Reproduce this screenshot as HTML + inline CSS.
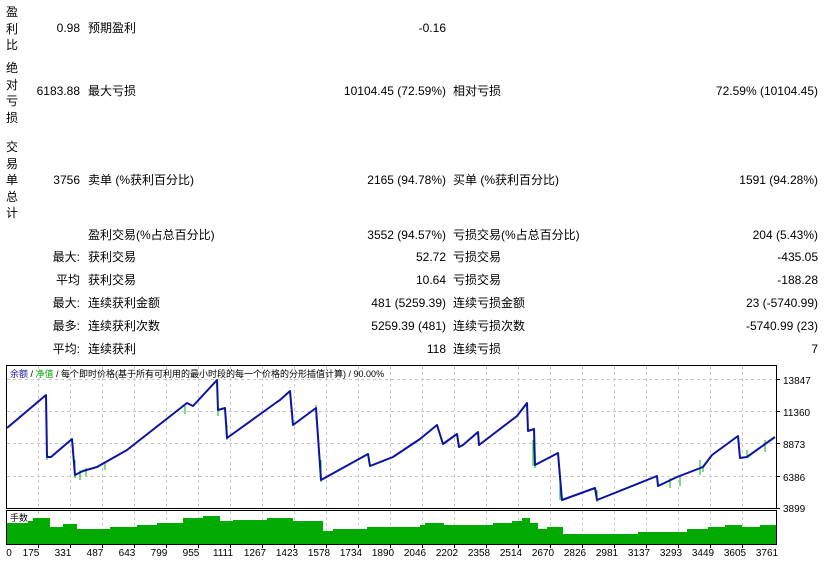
<!DOCTYPE html>
<html><head><meta charset="utf-8"><style>
body{margin:0;width:827px;height:564px;background:#fff;position:relative;overflow:hidden;font-family:"Liberation Sans","Noto Sans CJK SC",sans-serif;font-size:12px;color:#000}
.t{position:absolute;line-height:14px;white-space:nowrap}
.r{text-align:right}
.v{position:absolute;left:6px;width:12px;font-size:12px;line-height:16.5px}
</style></head><body>
<div class="v" style="top:4px">盈<br>利<br>比</div>
<div class="v" style="top:60px">绝<br>对<br>亏<br>损</div>
<div class="v" style="top:139px">交<br>易<br>单<br>总<br>计</div>

<div class="t r" style="right:747px;top:21px">0.98</div><div class="t" style="left:88px;top:21px">预期盈利</div><div class="t r" style="right:381px;top:21px">-0.16</div>
<div class="t r" style="right:747px;top:84px">6183.88</div><div class="t" style="left:88px;top:84px">最大亏损</div><div class="t r" style="right:381px;top:84px">10104.45 (72.59%)</div><div class="t" style="left:453px;top:84px">相对亏损</div><div class="t r" style="right:9px;top:84px">72.59% (10104.45)</div>
<div class="t r" style="right:747px;top:173px">3756</div><div class="t" style="left:88px;top:173px">卖单 (%获利百分比)</div><div class="t r" style="right:381px;top:173px">2165 (94.78%)</div><div class="t" style="left:453px;top:173px">买单 (%获利百分比)</div><div class="t r" style="right:9px;top:173px">1591 (94.28%)</div>
<div class="t" style="left:88px;top:228px">盈利交易(%占总百分比)</div><div class="t r" style="right:381px;top:228px">3552 (94.57%)</div><div class="t" style="left:453px;top:228px">亏损交易(%占总百分比)</div><div class="t r" style="right:9px;top:228px">204 (5.43%)</div>
<div class="t r" style="right:747px;top:250px">最大:</div><div class="t" style="left:88px;top:250px">获利交易</div><div class="t r" style="right:381px;top:250px">52.72</div><div class="t" style="left:453px;top:250px">亏损交易</div><div class="t r" style="right:9px;top:250px">-435.05</div>
<div class="t r" style="right:747px;top:273px">平均</div><div class="t" style="left:88px;top:273px">获利交易</div><div class="t r" style="right:381px;top:273px">10.64</div><div class="t" style="left:453px;top:273px">亏损交易</div><div class="t r" style="right:9px;top:273px">-188.28</div>
<div class="t r" style="right:747px;top:296px">最大:</div><div class="t" style="left:88px;top:296px">连续获利金额</div><div class="t r" style="right:381px;top:296px">481 (5259.39)</div><div class="t" style="left:453px;top:296px">连续亏损金额</div><div class="t r" style="right:9px;top:296px">23 (-5740.99)</div>
<div class="t r" style="right:747px;top:319px">最多:</div><div class="t" style="left:88px;top:319px">连续获利次数</div><div class="t r" style="right:381px;top:319px">5259.39 (481)</div><div class="t" style="left:453px;top:319px">连续亏损次数</div><div class="t r" style="right:9px;top:319px">-5740.99 (23)</div>
<div class="t r" style="right:747px;top:342px">平均:</div><div class="t" style="left:88px;top:342px">连续获利</div><div class="t r" style="right:381px;top:342px">118</div><div class="t" style="left:453px;top:342px">连续亏损</div><div class="t r" style="right:9px;top:342px">7</div>

<svg style="position:absolute;left:0;top:0" width="827" height="564" font-family="Liberation Sans, Noto Sans CJK SC, sans-serif" font-size="10">
<g stroke="#c8c8c8" stroke-dasharray="3,3" stroke-width="1">
<path d="M7 379.5H776M7 411.5H776M7 443.5H776M7 476.5H776"/>
<path d="M38.5 366V508M70.5 366V508M102.5 366V508M134.5 366V508M166.5 366V508M198.5 366V508M230.5 366V508M262.5 366V508M294.5 366V508M326.5 366V508M358.5 366V508M390.5 366V508M422.5 366V508M454.5 366V508M486.5 366V508M518.5 366V508M550.5 366V508M582.5 366V508M614.5 366V508M646.5 366V508M678.5 366V508M710.5 366V508M742.5 366V508"/>
<path d="M38.5 511V543M70.5 511V543M102.5 511V543M134.5 511V543M166.5 511V543M198.5 511V543M230.5 511V543M262.5 511V543M294.5 511V543M326.5 511V543M358.5 511V543M390.5 511V543M422.5 511V543M454.5 511V543M486.5 511V543M518.5 511V543M550.5 511V543M582.5 511V543M614.5 511V543M646.5 511V543M678.5 511V543M710.5 511V543M742.5 511V543"/>
</g>
<path fill="#00aa00" d="M7 544V523H28V521H33V518H50V527H63V524H77V529H110V527H137V525H157V523H183V518H203V516H220V521H233V520H267V518H293V521H323V531H333V529H367V527H383V527H420V525H425V523H444V525H493V523H512V521H522V518H530V523H538V529H547V527H563V534H598V534H638V532H687V529H708V527H725V525H742V527H760V525H776V544Z"/>
<path fill="none" stroke="#00bb00" stroke-width="1" d="M47 440V460M75 460V478M80 470V480M86 468V476M105 462V470M185 406V414M218 400V416M227 425V440M316 405V420M321 460V482M533 440V466M535 450V468M560 470V500M597 490V502M670 478V488M680 476V486M700 460V475M703 465V472M747 450V458M765 440V452"/>
<polyline fill="none" stroke="#0a14a0" stroke-width="2" stroke-linejoin="round" points="7,428 46,395 47,457 51,457 72,439 75,475 83,471 97,467 127,450 187,403 193,406 217,380 218,410 225,408 227,438 277,402 280,400 290,391 293,425 316,408 321,480 368,454 370,466 393,457 420,439 437,425 443,444 457,434 459,447 463,445 478,432 479,445 517,416 527,403 528,431 534,429 535,465 558,453 560,477 562,500 595,488 597,500 657,476 658,486 677,477 703,467 712,455 738,436 740,458 747,457 775,437"/>
<g fill="none" stroke="#000" stroke-width="1">
<rect x="6.5" y="365.5" width="770" height="143"/>
<rect x="6.5" y="510.5" width="770" height="34"/>
<path d="M777 379.5h3M777 411.5h3M777 443.5h3M777 476.5h3M777 508.5h3"/>
<path d="M38.5 545v3M70.5 545v3M102.5 545v3M134.5 545v3M166.5 545v3M198.5 545v3M230.5 545v3M262.5 545v3M294.5 545v3M326.5 545v3M358.5 545v3M390.5 545v3M422.5 545v3M454.5 545v3M486.5 545v3M518.5 545v3M550.5 545v3M582.5 545v3M614.5 545v3M646.5 545v3M678.5 545v3M710.5 545v3M742.5 545v3"/>
</g>
<text x="10" y="377" font-size="9"><tspan fill="#1a1aa0">余额</tspan> / <tspan fill="#00aa00">净值</tspan> / 每个即时价格(基于所有可利用的最小时段的每一个价格的分形插值计算) / 90.00%</text>
<text x="10" y="521" font-size="9">手数</text>
<g font-size="10">
<text x="783" y="384">13847</text><text x="783" y="416">11360</text><text x="783" y="448">8873</text><text x="783" y="481">6386</text><text x="783" y="512">3899</text>
</g>
<g font-size="10" text-anchor="middle">
<text x="9" y="556">0</text><text x="31" y="556">175</text><text x="63" y="556">331</text><text x="95" y="556">487</text><text x="127" y="556">643</text><text x="159" y="556">799</text><text x="191" y="556">955</text><text x="223" y="556">1111</text><text x="255" y="556">1267</text><text x="287" y="556">1423</text><text x="319" y="556">1578</text><text x="351" y="556">1734</text><text x="383" y="556">1890</text><text x="415" y="556">2046</text><text x="447" y="556">2202</text><text x="479" y="556">2358</text><text x="511" y="556">2514</text><text x="543" y="556">2670</text><text x="575" y="556">2826</text><text x="607" y="556">2981</text><text x="639" y="556">3137</text><text x="671" y="556">3293</text><text x="703" y="556">3449</text><text x="735" y="556">3605</text><text x="767" y="556">3761</text>
</g>
</svg>
</body></html>
